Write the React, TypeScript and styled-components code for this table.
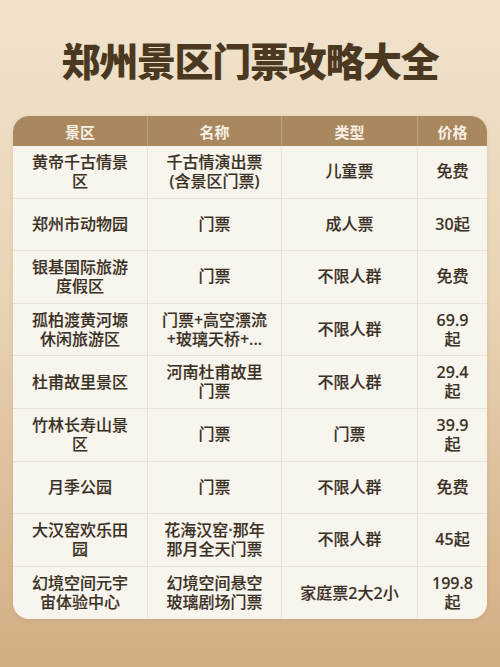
import * as React from "react";
import styled, { createGlobalStyle } from "styled-components";

const GlobalStyle = createGlobalStyle`
  html, body {
    margin: 0;
    padding: 0;
  }
  body {
    font-family: "Noto Sans", "Noto Sans CJK SC", sans-serif;
  }
`;

const Page = styled.main`
  width: 500px;
  height: 667px;
  box-sizing: border-box;
  padding: 32px 13px 0;
  background: linear-gradient(180deg, #f1e3cd 0%, #e8d3b4 45%, #d3ad83 100%);
  display: flex;
  flex-direction: column;
  align-items: stretch;
`;

const Title = styled.h1`
  margin: 0;
  height: 54px;
  text-align: center;
  font-family: "Noto Sans CJK SC", sans-serif;
  font-size: 39px;
  line-height: 54px;
  font-weight: 900;
  letter-spacing: -1.3px;
  color: #4a3920;
`;

const Table = styled.section`
  margin-top: 30px;
  border-radius: 16px;
  overflow: hidden;
  background: #f8f4ee;
  box-shadow: 0 1px 4px rgba(120, 85, 45, 0.12);
  display: grid;
  grid-template-columns: 135px 134px 136px 1fr;
`;

const HeadCell = styled.div<{ $last?: boolean }>`
  height: 30px;
  display: flex;
  align-items: center;
  justify-content: center;
  background: #a9875f;
  color: #f7efe4;
  font-size: 15px;
  font-weight: 700;
  border-right: ${(p) => (p.$last ? "none" : "1px solid #bc9f7e")};
`;

const Cell = styled.div<{ $last?: boolean; $bottom?: boolean }>`
  height: 52.6px;
  box-sizing: border-box;
  display: flex;
  align-items: center;
  justify-content: center;
  text-align: center;
  padding: 0 12px;
  font-size: 16px;
  line-height: 19px;
  font-weight: 500;
  color: #3a3024;
  -webkit-text-stroke: 0.15px #3a3024;
  border-right: ${(p) => (p.$last ? "none" : "1px solid #ebe2d7")};
  border-bottom: ${(p) => (p.$bottom ? "none" : "1px solid #ebe2d7")};
  word-break: break-all;
`;

const rows: [string, string, string, string][] = [
  ["黄帝千古情景区", "千古情演出票(含景区门票)", "儿童票", "免费"],
  ["郑州市动物园", "门票", "成人票", "30起"],
  ["银基国际旅游度假区", "门票", "不限人群", "免费"],
  ["孤柏渡黄河塬休闲旅游区", "门票+高空漂流+玻璃天桥+...", "不限人群", "69.9起"],
  ["杜甫故里景区", "河南杜甫故里门票", "不限人群", "29.4起"],
  ["竹林长寿山景区", "门票", "门票", "39.9起"],
  ["月季公园", "门票", "不限人群", "免费"],
  ["大汉窑欢乐田园", "花海汉窑·那年那月全天门票", "不限人群", "45起"],
  ["幻境空间元宇宙体验中心", "幻境空间悬空玻璃剧场门票", "家庭票2大2小", "199.8起"],
];

const heads = ["景区", "名称", "类型", "价格"];

export default function App() {
  return (
    <>
      <GlobalStyle />
      <Page>
        <Title>郑州景区门票攻略大全</Title>
        <Table>
          {heads.map((h, i) => (
            <HeadCell key={h} $last={i === 3}>
              {h}
            </HeadCell>
          ))}
          {rows.map((r, ri) =>
            r.map((c, ci) => (
              <Cell key={`${ri}-${ci}`} $last={ci === 3} $bottom={ri === rows.length - 1}>
                {c}
              </Cell>
            ))
          )}
        </Table>
      </Page>
    </>
  );
}
